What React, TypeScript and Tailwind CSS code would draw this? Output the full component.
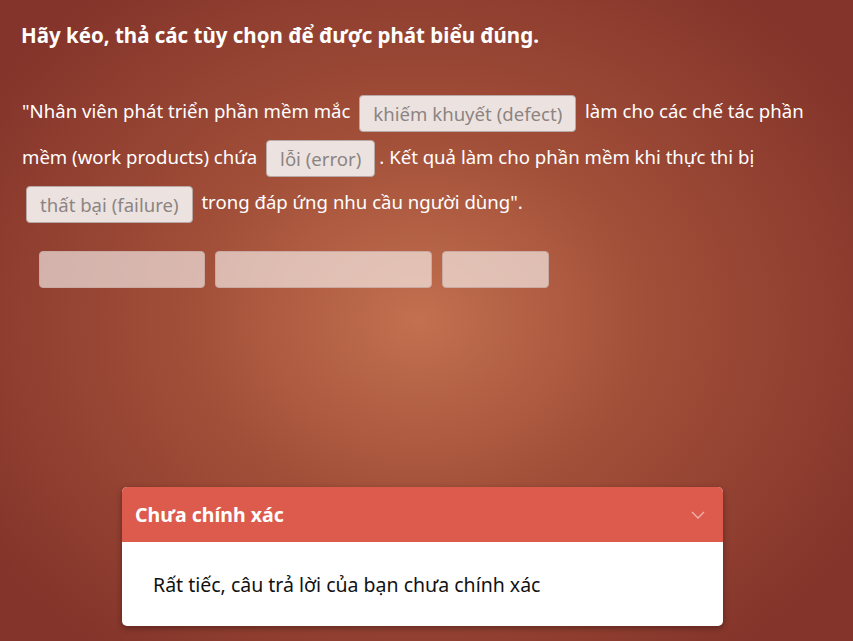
import React from 'react';

const chip =
  'inline-block mx-[4px] px-[13px] leading-[35px] rounded-[4px] border border-[#b9a9a6] bg-[#ece3e1] text-[#8c8481] align-middle';

function Chip({ children }: { children: React.ReactNode }) {
  return <span className={chip}>{children}</span>;
}

export default function App() {
  return (
    <div
      className="relative h-[641px] w-full overflow-hidden bg-[radial-gradient(ellipse_60%_65%_at_49%_50%,#c2704f_0%,#a24f39_45%,#84342a_100%)] text-white"
      style={{ fontFamily: '"Noto Sans", "Open Sans", sans-serif' }}
    >
      {/* Question */}
      <h1 className="pl-[21px] pt-[21px] text-[20.5px] font-bold leading-[28px]">
        Hãy kéo, thả các tùy chọn để được phát biểu đúng.
      </h1>

      <p className="mt-[39px] pl-[22px] pr-[25px] text-[18.6px] leading-[45.5px]">
        "Nhân viên phát triển phần mềm mắc <Chip>khiếm khuyết (defect)</Chip> làm cho các chế tác phần
        mềm (work products) chứa <Chip>lỗi (error)</Chip>. Kết quả làm cho phần mềm khi thực thi bị{' '}
        <Chip>thất bại (failure)</Chip> trong đáp ứng nhu cầu người dùng".
      </p>

      {/* Drop slots */}
      <div className="mt-[26px] flex gap-[10px] pl-[39px]">
        <div className="h-[37px] w-[166px] rounded-[4px] border border-[#c9a9a2] bg-white/60" />
        <div className="h-[37px] w-[217px] rounded-[4px] border border-[#c9a9a2] bg-white/60" />
        <div className="h-[37px] w-[107px] rounded-[4px] border border-[#c9a9a2] bg-white/60" />
      </div>

      {/* Feedback */}
      <div className="absolute left-[122px] top-[487px] w-[601px] overflow-hidden rounded-[5px] bg-white shadow-[0_2px_6px_rgba(0,0,0,0.35)]">
        <div className="flex h-[55px] items-center justify-between bg-[#dc5b4d] pl-[13px] pr-[18px]">
          <span className="text-[19.5px] font-bold">Chưa chính xác</span>
          <svg width="14" height="8" viewBox="0 0 14 8" fill="none">
            <path d="M1 1l6 6 6-6" stroke="#f1b3ab" strokeWidth="1.3" />
          </svg>
        </div>
        <div className="px-[31px] pb-[27px] pt-[29px] text-[19.5px] leading-[28px] text-[#111]">
          Rất tiếc, câu trả lời của bạn chưa chính xác
        </div>
      </div>
    </div>
  );
}
